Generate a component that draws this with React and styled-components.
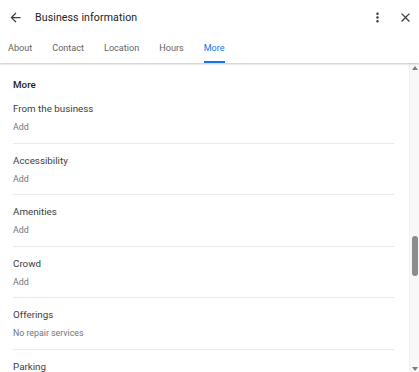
import React from 'react';
import styled, { createGlobalStyle } from 'styled-components';

const GlobalStyle = createGlobalStyle`
  html, body {
    margin: 0;
    padding: 0;
    background: #fff;
  }
  body {
    font-family: Roboto, "Liberation Sans", Arial, sans-serif;
    -webkit-font-smoothing: antialiased;
  }
`;

const StyledPanel = styled.div`
  display: flex;
  flex-direction: column;
  width: 419px;
  height: 372px;
  overflow: hidden;
  background: #fff;
`;

const StyledHeader = styled.header`
  position: relative;
  z-index: 1;
  background: #fff;
  box-shadow: 0 1px 2px rgba(60, 64, 67, 0.3);
`;

const StyledTopBar = styled.div`
  display: flex;
  align-items: center;
  height: 34px;
  padding: 0 6px 0 8px;
`;

const StyledIcon = styled.svg`
  width: 15px;
  height: 15px;
  flex: none;
  fill: #3c4043;
  margin-left: ${({ gap }) => gap || 0}px;
`;

const StyledTitle = styled.h1`
  flex: 1;
  margin: 0 0 0 12px;
  font-size: 10.6px;
  font-weight: 400;
  color: #202124;
  letter-spacing: 0.1px;
`;

const StyledTabs = styled.nav`
  display: flex;
  gap: 20px;
  height: 29px;
  padding-left: 8px;
`;

const StyledTab = styled.div`
  display: flex;
  align-items: center;
  padding-top: 1px;
  font-size: 9.1px;
  font-weight: 400;
  color: ${({ active }) => (active ? '#1a73e8' : '#5f6368')};
  border-bottom: 2px solid ${({ active }) => (active ? '#1a73e8' : 'transparent')};
  box-sizing: border-box;
`;

const StyledBody = styled.div`
  display: flex;
  flex: 1;
  min-height: 0;
`;

const StyledContent = styled.div`
  flex: 1;
  padding: 15px 15px 0 13px;
  overflow: hidden;
`;

const StyledHeading = styled.h2`
  margin: 0;
  height: 14px;
  line-height: 14px;
  font-size: 9.8px;
  font-weight: 500;
  color: #202124;
`;

const StyledItem = styled.div`
  padding: 9px 0 8.5px;
  border-bottom: 1px solid #e8eaed;
`;

const StyledItemTitle = styled.div`
  line-height: 16px;
  font-size: 9.8px;
  color: #3c4043;
`;

const StyledItemValue = styled.div`
  margin-top: 3px;
  line-height: 14px;
  font-size: 8.8px;
  color: #70757a;
`;

const StyledScrollbar = styled.div`
  display: flex;
  flex-direction: column;
  align-items: center;
  width: 9px;
  background: #f8f8f8;
  border-left: 1px solid #f0f0f0;
`;

const StyledArrow = styled.div`
  width: 0;
  height: 0;
  margin: ${({ down }) => (down ? '0 0 1px' : '3px 0 0')};
  border-left: 3.5px solid transparent;
  border-right: 3.5px solid transparent;
  border-${({ down }) => (down ? 'top' : 'bottom')}: 4px solid #7d7d7d;
`;

const StyledTrack = styled.div`
  flex: 1;
  width: 100%;
  display: flex;
  justify-content: center;
`;

const StyledThumb = styled.div`
  width: 6px;
  height: 40px;
  margin-top: 166px;
  border-radius: 3px;
  background: #8c8c8c;
`;

const tabs = ['About', 'Contact', 'Location', 'Hours', 'More'];

const items = [
  { title: 'From the business', value: 'Add' },
  { title: 'Accessibility', value: 'Add' },
  { title: 'Amenities', value: 'Add' },
  { title: 'Crowd', value: 'Add' },
  { title: 'Offerings', value: 'No repair services' },
  { title: 'Parking', value: 'Add' },
];

const App = () => (
  <>
    <GlobalStyle />
    <StyledPanel>
      <StyledHeader>
        <StyledTopBar>
          <StyledIcon viewBox="0 0 24 24">
            <path d="M20 11H7.83l5.59-5.59L12 4l-8 8 8 8 1.41-1.41L7.83 13H20v-2z" />
          </StyledIcon>
          <StyledTitle>Business information</StyledTitle>
          <StyledIcon viewBox="0 0 24 24">
            <path d="M12 8c1.1 0 2-.9 2-2s-.9-2-2-2-2 .9-2 2 .9 2 2 2zm0 2c-1.1 0-2 .9-2 2s.9 2 2 2 2-.9 2-2-.9-2-2-2zm0 6c-1.1 0-2 .9-2 2s.9 2 2 2 2-.9 2-2-.9-2-2-2z" />
          </StyledIcon>
          <StyledIcon viewBox="0 0 24 24" gap={13}>
            <path d="M19 6.41L17.59 5 12 10.59 6.41 5 5 6.41 10.59 12 5 17.59 6.41 19 12 13.41 17.59 19 19 17.59 13.41 12z" />
          </StyledIcon>
        </StyledTopBar>
        <StyledTabs>
          {tabs.map(tab => (
            <StyledTab key={tab} active={tab === 'More'}>
              {tab}
            </StyledTab>
          ))}
        </StyledTabs>
      </StyledHeader>
      <StyledBody>
        <StyledContent>
          <StyledHeading>More</StyledHeading>
          {items.map(item => (
            <StyledItem key={item.title}>
              <StyledItemTitle>{item.title}</StyledItemTitle>
              <StyledItemValue>{item.value}</StyledItemValue>
            </StyledItem>
          ))}
        </StyledContent>
        <StyledScrollbar>
          <StyledArrow />
          <StyledTrack>
            <StyledThumb />
          </StyledTrack>
          <StyledArrow down />
        </StyledScrollbar>
      </StyledBody>
    </StyledPanel>
  </>
);

export default App;
